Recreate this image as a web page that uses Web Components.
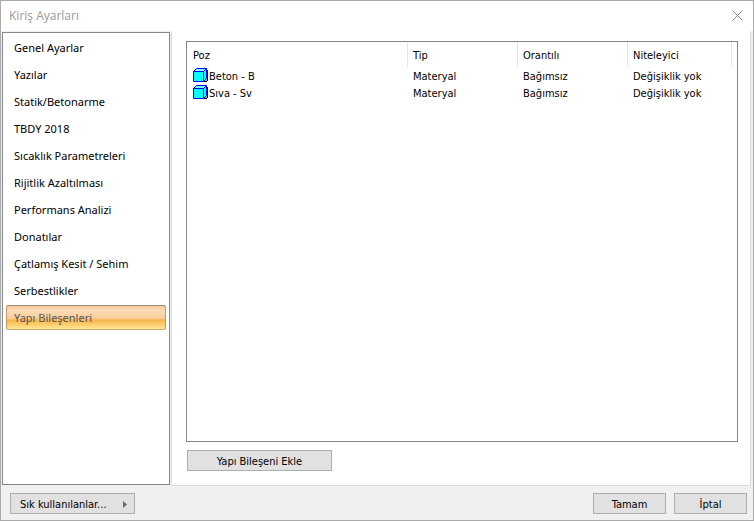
<!DOCTYPE html>
<html lang="tr">
<head>
<meta charset="utf-8">
<title>Kiriş Ayarları</title>
<style>
html, body { margin: 0; height: 100%; }
body { font: 11px/13px "DejaVu Sans Condensed", "Noto Sans", sans-serif; color: #000; overflow: hidden; }
</style>
</head>
<body>
<settings-dialog></settings-dialog>
<script>
class DialogButton extends HTMLElement {
  connectedCallback() {
    this.attachShadow({ mode: "open" }).innerHTML = `
      <style>
        :host { display: block; width: 73px; }
        button { box-sizing: border-box; width: 100%; height: 21px; margin: 0; padding: 1px 8px 0; border: 1px solid #adadad;
          background: #e1e1e1; color: #000; font: inherit; display: flex; align-items: center; justify-content: center; white-space: nowrap; }
        :host([menu]) button { justify-content: space-between; padding: 1px 7px 0 9px; }
        svg { display: none; width: 4px; height: 7px; }
        :host([menu]) svg { display: block; }
      </style>
      <button type="button"><span><slot></slot></span><svg viewBox="0 0 4 7"><path d="M0 0L4 3.5L0 7Z" fill="#6d6d6d"/></svg></button>`;
  }
}
customElements.define("dialog-button", DialogButton);

class TitleBar extends HTMLElement {
  connectedCallback() {
    this.attachShadow({ mode: "open" }).innerHTML = `
      <style>
        :host { display: flex; align-items: center; justify-content: space-between; box-sizing: border-box; height: 30px; padding: 0 10px 2px 8px; background: #fff; }
        h1 { margin: 0; padding-top: 2px; font: 12px/16px "Open Sans", "Noto Sans", sans-serif; color: #999; }
        button { border: 0; padding: 0; margin: 0; background: none; width: 11px; height: 11px; }
        svg { display: block; }
      </style>
      <h1><slot></slot></h1>
      <button type="button" aria-label="Kapat"><svg width="11" height="11" viewBox="0 0 11 11"><path d="M.5 .5L10.5 10.5M10.5 .5L.5 10.5" stroke="#8c8c8c" fill="none"/></svg></button>`;
  }
}
customElements.define("title-bar", TitleBar);

class NavItem extends HTMLElement {
  connectedCallback() {
    this.attachShadow({ mode: "open" }).innerHTML = `
      <style>
        :host { display: block; }
        button { box-sizing: border-box; display: block; width: 100%; height: 25px; margin: 0; padding: 0 7px; border: 1px solid transparent; border-radius: 2px;
          background: none; color: #000; text-align: left; font: 11px/23px "Noto Sans", sans-serif; white-space: nowrap; }
        :host([selected]) button { color: #555; border-color: #a58d63 #bd9a63 #c6ac77;
          background: linear-gradient(#f3c9a0 0, #fbdab6 4px, #fbcf9c 12px, #f9b550 14px, #fdca68 18px, #ffe793 23px); }
      </style>
      <button type="button"><slot></slot></button>`;
    if (this.hasAttribute("selected")) this.shadowRoot.querySelector("button").setAttribute("aria-current", "page");
  }
}
customElements.define("nav-item", NavItem);

class NavList extends HTMLElement {
  connectedCallback() {
    this.attachShadow({ mode: "open" }).innerHTML = `
      <style>
        :host { display: block; box-sizing: border-box; border: 1px solid #828790; background: #fff; padding: 2px 3px; }
        nav { display: flex; flex-direction: column; gap: 2px; }
      </style>
      <nav><slot></slot></nav>`;
  }
}
customElements.define("nav-list", NavList);

class CubeIcon extends HTMLElement {
  connectedCallback() {
    this.attachShadow({ mode: "open" }).innerHTML = `
      <style>:host { display: block; width: 16px; height: 16px; } svg { display: block; }</style>
      <svg width="16" height="16" viewBox="0 -1 16 16">
        <path d="M14.5 2V13M11 13.5H14" fill="none" stroke="#000"/>
        <path d="M11 13L14 10V13Z" fill="#b0b0a0"/>
        <path d="M.5 3.5L3.5 .5H13.5V10.5L10.5 13.5H.5Z" fill="#0ff"/>
        <path d="M1 3L3.5 1H13L10.5 3Z" fill="#7ff"/>
        <path d="M.5 3.5H10.5V13.5H.5ZM.5 3.5L3.5 .5H13.5V10.5L10.5 13.5M10.5 3.5L13.5 .5" fill="none" stroke="#00f"/>
      </svg>`;
  }
}
customElements.define("cube-icon", CubeIcon);

class ComponentTable extends HTMLElement {
  connectedCallback() {
    const rows = [["Beton - B", "Materyal", "Bağımsız", "Değişiklik yok"], ["Sıva - Sv", "Materyal", "Bağımsız", "Değişiklik yok"]];
    this.attachShadow({ mode: "open" }).innerHTML = `
      <style>
        :host { display: block; box-sizing: border-box; border: 1px solid #828790; background: #fff; overflow: hidden; }
        table { width: calc(100% - 5px); border-collapse: separate; border-spacing: 0; table-layout: fixed; }
        th, td { box-sizing: border-box; padding: 0 6px; text-align: left; font-weight: normal; white-space: nowrap; }
        th { height: 25px; padding-top: 2px; border-right: 1px solid #e5e5e5; }
        td { height: 17px; vertical-align: top; }
        .name { display: flex; align-items: flex-end; }
        .head th:first-child { width: 221px; }
        .head th:nth-child(2), .head th:nth-child(3) { width: 110px; }
        th + th, td + td { padding-left: 5px; }
        td + td { padding-top: 3px; }
      </style>
      <table>
        <thead><tr class="head"><th>Poz</th><th>Tip</th><th>Orantılı</th><th>Niteleyici</th></tr></thead>
        <tbody>${rows.map(r => `<tr><td><span class="name"><cube-icon></cube-icon>${r[0]}</span></td><td>${r[1]}</td><td>${r[2]}</td><td>${r[3]}</td></tr>`).join("")}</tbody>
      </table>`;
  }
}
customElements.define("component-table", ComponentTable);

class SettingsDialog extends HTMLElement {
  connectedCallback() {
    this.attachShadow({ mode: "open" }).innerHTML = `
      <style>
        :host { display: flex; flex-direction: column; box-sizing: border-box; height: 100vh; border: 1px solid #aaa; background: #f0f0f0; }
        .body { flex: 1; display: flex; min-height: 0; padding-right: 2px; }
        nav-list { width: 168px; margin: 1px; }
        main { flex: 1; min-width: 0; display: flex; flex-direction: column; align-items: flex-start; gap: 8px; padding: 9px 12px 14px 14px;
          background: #fff; border: 1px solid #dcdcdc; border-top-color: #fff; }
        component-table { flex: 1; align-self: stretch; }
        .add { width: 145px; margin-left: 1px; }
        footer { display: flex; gap: 8px; padding: 7px 6px 6px 9px; }
        .fav { width: 125px; margin-right: auto; }
      </style>
      <title-bar>Kiriş Ayarları</title-bar>
      <div class="body">
        <nav-list>
          ${["Genel Ayarlar", "Yazılar", "Statik/Betonarme", "TBDY 2018", "Sıcaklık Parametreleri", "Rijitlik Azaltılması", "Performans Analizi", "Donatılar", "Çatlamış Kesit / Sehim", "Serbestlikler"].map(t => `<nav-item>${t}</nav-item>`).join("")}
          <nav-item selected>Yapı Bileşenleri</nav-item>
        </nav-list>
        <main>
          <component-table></component-table>
          <dialog-button class="add">Yapı Bileşeni Ekle</dialog-button>
        </main>
      </div>
      <footer>
        <dialog-button class="fav" menu>Sık kullanılanlar...</dialog-button>
        <dialog-button>Tamam</dialog-button>
        <dialog-button>İptal</dialog-button>
      </footer>`;
  }
}
customElements.define("settings-dialog", SettingsDialog);
</script>
</body>
</html>
